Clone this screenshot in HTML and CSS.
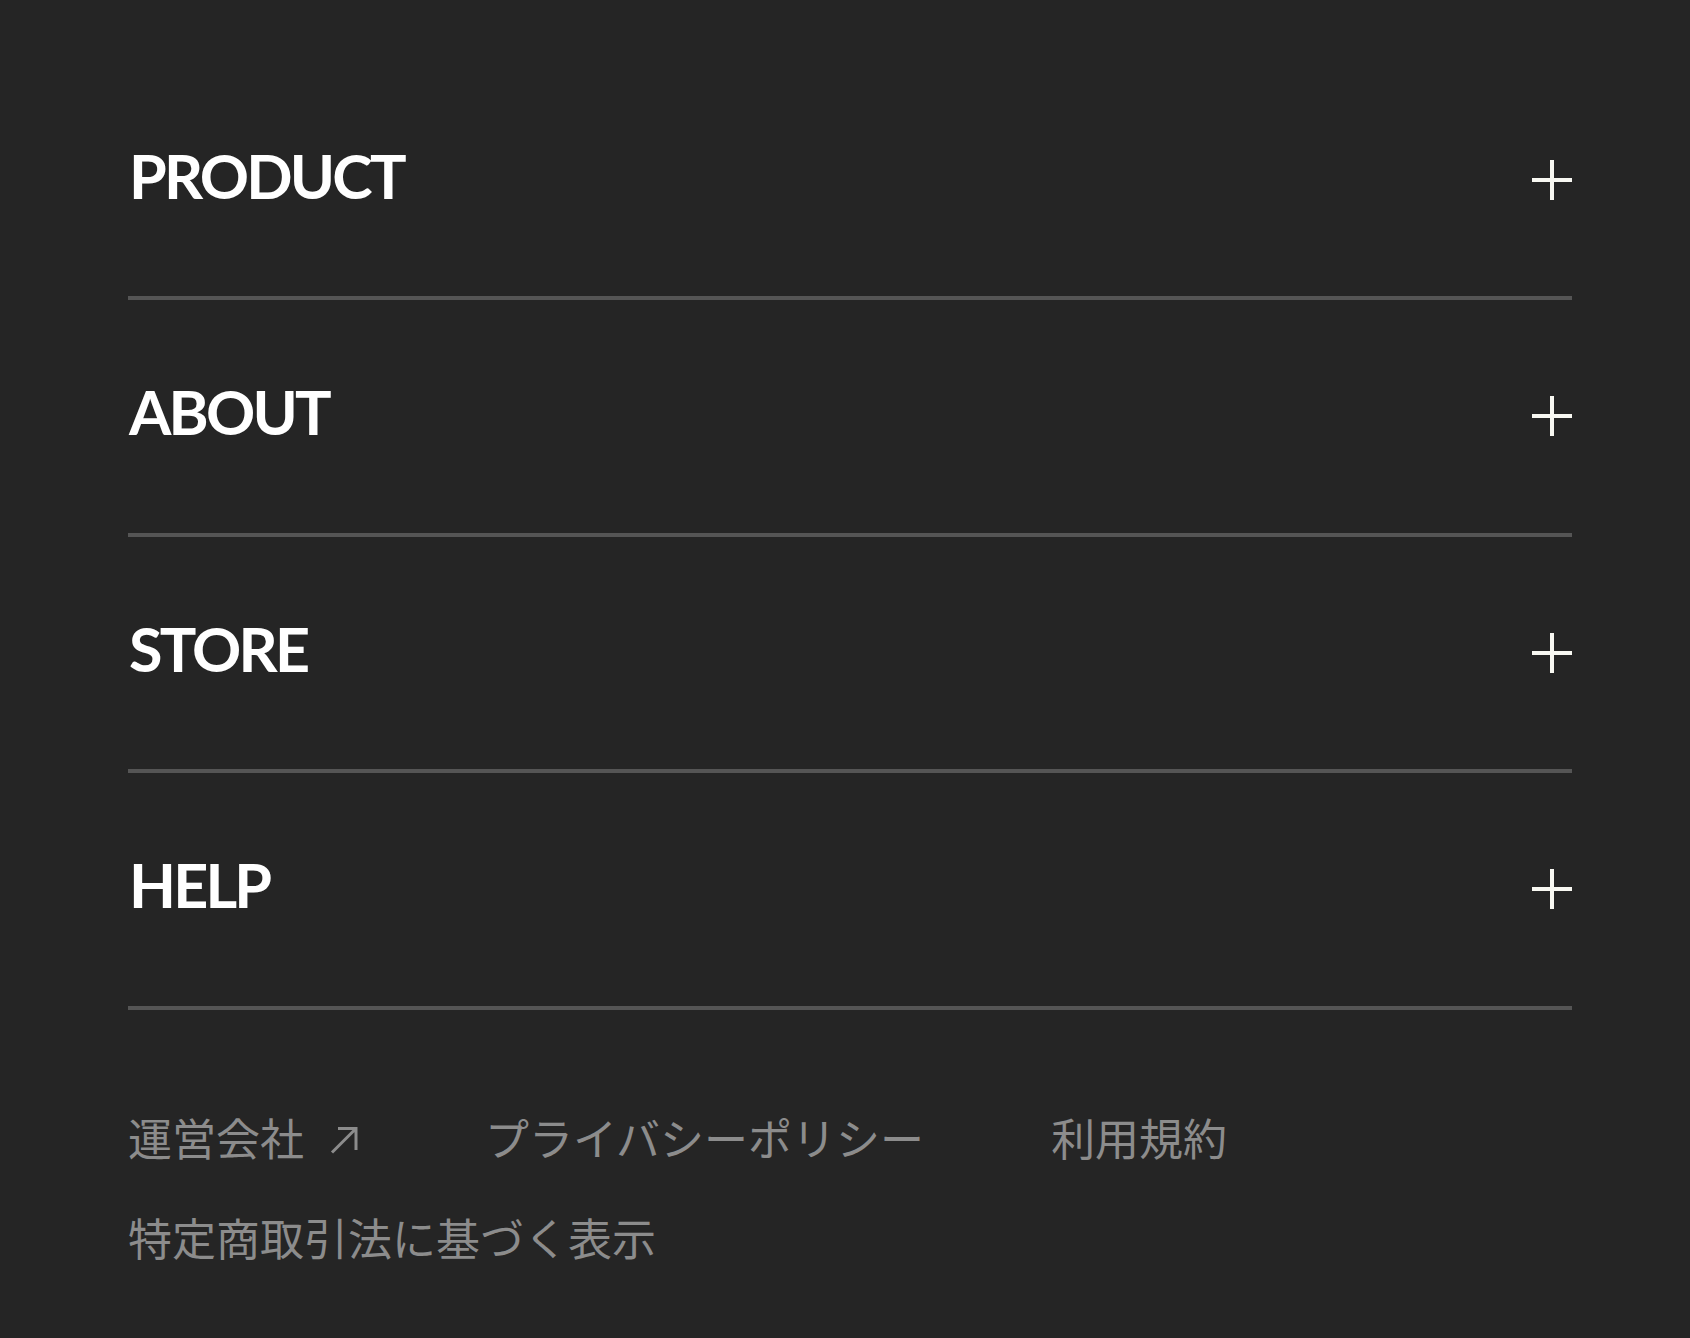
FILE: index.html
```html
<!doctype html>
<html lang="ja">
  <head>
    <meta charset="UTF-8" />
    <meta name="viewport" content="width=device-width, initial-scale=1.0" />
    <title>Footer</title>
    <link rel="stylesheet" href="styles.css">
  </head>
  <body>
    <footer class="site-footer">
      <nav class="menu">
        <div class="menu-row">
          <span class="menu-title">PRODUCT</span>
          <svg class="menu-plus" width="40" height="40" viewBox="0 0 40 40"><path d="M20 0v40M0 20h40" /></svg>
        </div>
        <div class="menu-row">
          <span class="menu-title">ABOUT</span>
          <svg class="menu-plus" width="40" height="40" viewBox="0 0 40 40"><path d="M20 0v40M0 20h40" /></svg>
        </div>
        <div class="menu-row">
          <span class="menu-title">STORE</span>
          <svg class="menu-plus" width="40" height="40" viewBox="0 0 40 40"><path d="M20 0v40M0 20h40" /></svg>
        </div>
        <div class="menu-row">
          <span class="menu-title">HELP</span>
          <svg class="menu-plus" width="40" height="40" viewBox="0 0 40 40"><path d="M20 0v40M0 20h40" /></svg>
        </div>
      </nav>

      <ul class="legal">
        <li>
          <a class="legal-link" href="#">運営会社
            <svg class="legal-arrow" width="28" height="28" viewBox="0 0 28 28"><path d="M8 2.5H26V24M26 2.5L2 26.5" /></svg>
          </a>
        </li>
        <li><a class="legal-link" href="#">プライバシーポリシー</a></li>
        <li><a class="legal-link" href="#">利用規約</a></li>
        <li><a class="legal-link" href="#">特定商取引法に基づく表示</a></li>
      </ul>
    </footer>
  </body>
</html>
```

FILE: styles.css
```css
html,
body {
  margin: 0;
  background: #252525;
}
body {
  min-height: 1338px;
  font-family: "Noto Sans CJK JP", "Noto Sans", sans-serif;
}
.site-footer {
  padding: 63.5px 118px 0 128px;
}
.menu-row {
  display: flex;
  align-items: center;
  justify-content: space-between;
  height: 232.5px;
  border-bottom: 4px solid #555;
}
.menu-title {
  margin-bottom: 9px;
  padding-left: 1px;
  font-family: Lato, "Liberation Sans", sans-serif;
  font-weight: 700;
  font-size: 61px;
  letter-spacing: -2.8px;
  color: #fff;
}
.menu-plus {
  flex: none;
  stroke: #f8f8f2;
  stroke-width: 4;
  fill: none;
}
.legal {
  display: flex;
  flex-wrap: wrap;
  column-gap: 127px;
  row-gap: 34px;
  list-style: none;
  margin: 94px 0 0;
  padding: 0;
}
.legal-link {
  display: flex;
  align-items: center;
  font-size: 44px;
  line-height: 66px;
  color: #8c8c8c;
  text-decoration: none;
}
.legal-arrow {
  margin: 6px 0 0 26px;
  stroke: #8c8c8c;
  stroke-width: 3;
  fill: none;
}
```
